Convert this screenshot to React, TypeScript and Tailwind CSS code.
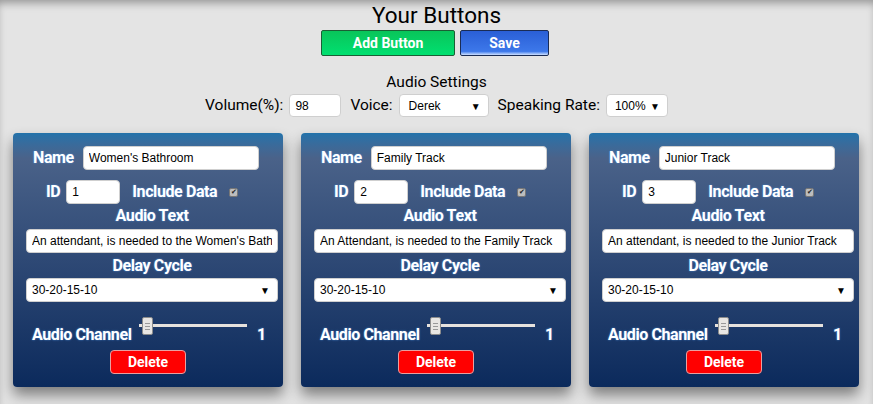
import { useState } from "react";

interface ButtonCfg {
  id: number;
  name: string;
  text: string;
}

const buttons: ButtonCfg[] = [
  { id: 1, name: "Women's Bathroom", text: "An attendant, is needed to the Women's Bathroom" },
  { id: 2, name: "Family Track", text: "An Attendant, is needed to the Family Track" },
  { id: 3, name: "Junior Track", text: "An attendant, is needed to the Junior Track" },
];

const label =
  "text-white font-bold text-[16px] leading-[18px] tracking-[-0.4px] whitespace-nowrap [text-shadow:0_0_2px_rgba(80,150,230,0.9)]";
const field =
  "h-6 rounded-[4px] bg-white px-[5px] text-[12px] text-black outline-none border border-[#cfcfcf] font-['Liberation_Sans',Arial,sans-serif]";

function Arrow() {
  return <span className="pointer-events-none absolute right-[7px] top-1/2 -translate-y-1/2 text-[10px] text-black">▼</span>;
}

function Card({ cfg }: { cfg: ButtonCfg }) {
  const [name, setName] = useState(cfg.name);
  const [text, setText] = useState(cfg.text);
  return (
    <div className="w-[270px] h-[254px] rounded-[4px] bg-gradient-to-b from-[#2272aa] via-[#4a6289] via-[10%] to-[#0b2a5c] shadow-[0_8px_14px_rgba(0,0,0,0.45)] pl-[13px] pr-[5px] pt-[13px] flex flex-col">
      <div className="flex items-center gap-[9px] pl-[7px]">
        <span className={label}>Name</span>
        <input className={`${field} w-[176px]`} value={name} onChange={(e) => setName(e.target.value)} />
      </div>
      <div className="flex items-center mt-[10px] pl-[20px]">
        <span className={label}>ID</span>
        <input className={`${field} w-[54px] ml-[6px]`} defaultValue={cfg.id} />
        <span className={`${label} ml-[12px]`}>Include Data</span>
        <span className="ml-[12px] flex h-[9px] w-[9px] items-center justify-center rounded-[2px] bg-[#bdbdbd] border border-[#777] text-[7px] leading-none text-[#222]">✔</span>
      </div>
      <div className={`${label} text-center mt-[3px] w-[252px]`}>Audio Text</div>
      <input className={`${field} w-[252px] mt-[4px]`} value={text} onChange={(e) => setText(e.target.value)} />
      <div className={`${label} text-center mt-[4px] w-[252px]`}>Delay Cycle</div>
      <div className={`${field} relative w-[252px] mt-[3px] flex items-center`}>
        <span>30-20-15-10</span>
        <Arrow />
      </div>
      <div className="flex items-start h-[18px] mt-[24px] pl-[6px]">
        <span className={`${label} w-[107px]`}>Audio Channel</span>
        <div className="relative mt-[-2px] h-[3px] w-[108px] bg-[#e6e2dd]">
          <div className="absolute left-[3px] -top-[7px] h-[18px] w-[11px] rounded-[2px] border border-[#8c8c8c] bg-[#e8e6e3] flex flex-col items-center justify-center gap-[2px]">
            <span className="h-px w-[5px] bg-[#999]" />
            <span className="h-px w-[5px] bg-[#999]" />
            <span className="h-px w-[5px] bg-[#999]" />
          </div>
        </div>
        <span className={`${label} ml-[10px]`}>1</span>
      </div>
      <div className="flex justify-center w-[270px] -ml-[13px] mt-[6px]">
        <button className="h-6 w-[76px] rounded-[4px] border border-[#e8a0a0] bg-[#ff0000] text-white font-bold text-[14px] font-['Roboto',sans-serif]">
          Delete
        </button>
      </div>
    </div>
  );
}

export default function App() {
  return (
    <div className="min-h-[404px] bg-[#e4e4e4] shadow-[inset_0_6px_8px_-3px_rgba(0,0,0,0.35)] font-['Roboto',sans-serif] text-black">
      <h1 className="text-center text-[22.5px] font-normal leading-[30px] pt-0">Your Buttons</h1>
      <div className="flex justify-center gap-[5px] pr-[3px]">
        <button className="h-[26px] w-[134px] rounded-[2px] border border-[#1b5e35] bg-gradient-to-b from-[#09c55a] to-[#00e070] text-white font-bold text-[14px]">
          Add Button
        </button>
        <button className="h-[26px] w-[89px] rounded-[2px] border border-[#1a2c55] bg-gradient-to-b from-[#2a5fd6] via-[#3d78ea] via-[85%] to-[#cfe0ff] text-white font-bold text-[14px]">
          Save
        </button>
      </div>
      <div className="text-center text-[15.5px] leading-[18px] mt-[17px]">Audio Settings</div>
      <div className="flex items-center justify-center gap-[6px] mt-[3px] text-[15.5px]">
        <span>Volume(%):</span>
        <input className={`${field} w-[52px] h-[23px]`} defaultValue="98" />
        <span className="ml-[3px]">Voice:</span>
        <div className={`${field} relative w-[90px] h-[23px] flex items-center`}>
          <span className="pl-[4px]">Derek</span>
          <Arrow />
        </div>
        <span className="ml-[3px]">Speaking Rate:</span>
        <div className={`${field} relative w-[62px] h-[23px] flex items-center`}>
          <span className="pl-[3px]">100%</span>
          <Arrow />
        </div>
      </div>
      <div className="flex justify-center gap-[18px] mt-[16px] pb-[15px] pr-[1px]">
        {buttons.map((b) => (
          <Card key={b.id} cfg={b} />
        ))}
      </div>
    </div>
  );
}
